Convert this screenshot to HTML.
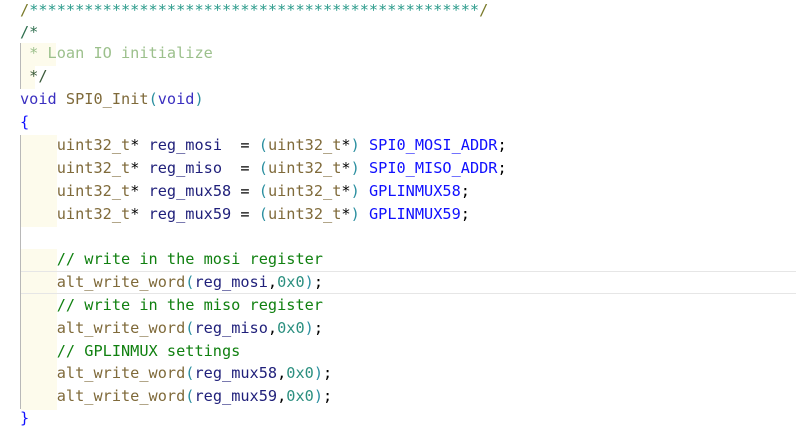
<!DOCTYPE html>
<html><head><style>
body{margin:0;width:796px;height:434px;background:#fff;overflow:hidden;position:relative;font-family:"DejaVu Sans Mono","Liberation Mono",monospace;font-size:15.25px}
.l{position:absolute;left:20px;white-space:pre;height:23px;line-height:23px}
.c{color:#3a8a3a}.cs{color:#2a9a8a}.cl{color:#9cc08c}
.k{color:#3a2fc0}.t{color:#7f6a3a}.v{color:#1f1f7a}.p{color:#2b8fa0}.m{color:#1010ff}.f{color:#7f6a3a}.g{color:#108010}.n{color:#2b8f7f}
.gut{position:absolute;left:20px;width:1px;background:#b8b8b8}
.ind{position:absolute;left:21px;width:36px;height:23px;background:#fdfbec}
</style></head><body>
<div class="gut" style="top:43px;height:46px"></div>
<div class="gut" style="top:135px;height:274px"></div>
<div class="ind" style="top:43px;width:35px"></div>
<div class="ind" style="top:66px;width:14px"></div>
<div class="ind" style="top:135px"></div><div class="ind" style="top:158px"></div><div class="ind" style="top:181px"></div><div class="ind" style="top:204px"></div>
<div class="ind" style="top:249px"></div><div class="ind" style="top:272px"></div><div class="ind" style="top:295px"></div><div class="ind" style="top:318px"></div><div class="ind" style="top:341px"></div><div class="ind" style="top:364px"></div><div class="ind" style="top:387px"></div>
<div style="position:absolute;left:21px;right:0;top:271px;height:1px;background:#e6e6e6"></div>
<div style="position:absolute;left:21px;right:0;top:293px;height:1px;background:#e6e6e6"></div>
<div class="l" style="top:-1px"><span style="color:#7a7a2a">/</span><span class="cs">*************************************************</span><span style="color:#7a7a2a">/</span></div>
<div class="l c" style="top:21px;color:#2f6f4f">/*</div>
<div class="l cl" style="top:42px"> * Loan IO initialize</div>
<div class="l" style="top:65px;color:#3a5a3a"> */</div>
<div class="l" style="top:88px"><span class="k">void</span> <span class="t">SPI0_Init</span><span class="p">(</span><span class="k">void</span><span class="p">)</span></div>
<div class="l m" style="top:111px">{</div>
<div class="l" style="top:134px">    <span class="t">uint32_t</span>* <span class="v">reg_mosi</span>  = <span class="p">(</span><span class="t">uint32_t</span>*<span class="p">)</span> <span class="m">SPI0_MOSI_ADDR</span>;</div>
<div class="l" style="top:157px">    <span class="t">uint32_t</span>* <span class="v">reg_miso</span>  = <span class="p">(</span><span class="t">uint32_t</span>*<span class="p">)</span> <span class="m">SPI0_MISO_ADDR</span>;</div>
<div class="l" style="top:180px">    <span class="t">uint32_t</span>* <span class="v">reg_mux58</span> = <span class="p">(</span><span class="t">uint32_t</span>*<span class="p">)</span> <span class="m">GPLINMUX58</span>;</div>
<div class="l" style="top:203px">    <span class="t">uint32_t</span>* <span class="v">reg_mux59</span> = <span class="p">(</span><span class="t">uint32_t</span>*<span class="p">)</span> <span class="m">GPLINMUX59</span>;</div>
<div class="l g" style="top:248px">    // write in the mosi register</div>
<div class="l" style="top:271px">    <span class="f">alt_write_word</span><span class="p">(</span><span class="v">reg_mosi</span>,<span class="n">0x0</span><span class="p">)</span>;</div>
<div class="l g" style="top:294px">    // write in the miso register</div>
<div class="l" style="top:317px">    <span class="f">alt_write_word</span><span class="p">(</span><span class="v">reg_miso</span>,<span class="n">0x0</span><span class="p">)</span>;</div>
<div class="l g" style="top:340px">    // GPLINMUX settings</div>
<div class="l" style="top:362px">    <span class="f">alt_write_word</span><span class="p">(</span><span class="v">reg_mux58</span>,<span class="n">0x0</span><span class="p">)</span>;</div>
<div class="l" style="top:385px">    <span class="f">alt_write_word</span><span class="p">(</span><span class="v">reg_mux59</span>,<span class="n">0x0</span><span class="p">)</span>;</div>
<div class="l m" style="top:407px">}</div>
</body></html>
